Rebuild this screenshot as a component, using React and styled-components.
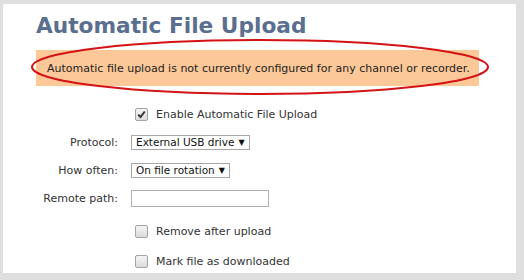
import React from "react";
import styled, { createGlobalStyle } from "styled-components";

const GlobalStyle = createGlobalStyle`
  html, body {
    margin: 0;
    padding: 0;
    background: #dfdfdf;
  }
  body {
    width: 524px;
    height: 280px;
    overflow: hidden;
    font-family: "DejaVu Sans", Verdana, sans-serif;
  }
`;

const Page = styled.div`
  padding: 4px 0 0 3px;
`;

const Panel = styled.div`
  width: 513px;
  height: 269px;
  background: #fff;
  box-sizing: border-box;
  padding: 7px 0 0 33px;
`;

const Title = styled.h1`
  margin: 0;
  font-family: "DejaVu Sans", Verdana, sans-serif;
  font-weight: bold;
  font-size: 21.7px;
  line-height: 30px;
  color: #5a6f8f;
`;

const NoticeWrap = styled.div`
  position: relative;
  margin-top: 9px;
  width: 443px;
`;

const Notice = styled.div`
  height: 36px;
  background: #fcc897;
  display: flex;
  align-items: center;
  padding-left: 11px;
  font-size: 11px;
  color: #222;
  white-space: nowrap;
`;

const Ellipse = styled.svg`
  position: absolute;
  left: -5px;
  top: -11px;
  overflow: visible;
  pointer-events: none;
`;

const Form = styled.div`
  display: grid;
  grid-template-columns: 82px 1fr;
  column-gap: 13px;
  margin-top: 14px;
  font-size: 11px;
  color: #333;
`;

const Label = styled.div`
  height: ${(p) => p.h || 28}px;
  display: flex;
  align-items: center;
  justify-content: flex-end;
`;

const Cell = styled.div`
  height: ${(p) => p.h || 28}px;
  display: flex;
  align-items: center;
`;

const Check = styled.span`
  width: 11px;
  height: 11px;
  margin: 0 8px 0 4px;
  border: 1px solid #a3a3a3;
  border-radius: 2px;
  background: linear-gradient(#f4f4f4, #dcdcdc);
  display: inline-flex;
  align-items: center;
  justify-content: center;
  flex: none;
`;

const Select = styled.div`
  height: 15px;
  box-sizing: border-box;
  border: 1px solid #a8a8a8;
  background: #fff;
  display: flex;
  align-items: center;
  padding: 0 4px;
  font-size: 10.5px;
  color: #111;
  gap: 4px;
`;

const Arrow = styled.span`
  font-size: 8px;
  color: #111;
`;

const TextBox = styled.div`
  width: 138px;
  height: 17px;
  box-sizing: border-box;
  border: 1px solid #b0b0b0;
  background: #fff;
`;

const CheckRow = ({ checked, label, h }) => (
  <>
    <Label h={h} />
    <Cell h={h}>
      <Check>
        {checked && (
          <svg width="9" height="9" viewBox="0 0 9 9">
            <path d="M1.2 4.6 L3.5 7 L7.8 1.5" fill="none" stroke="#333" strokeWidth="2" />
          </svg>
        )}
      </Check>
      {label}
    </Cell>
  </>
);

export default function App() {
  return (
    <Page>
      <GlobalStyle />
      <Panel>
        <Title>Automatic File Upload</Title>
        <NoticeWrap>
          <Notice>Automatic file upload is not currently configured for any channel or recorder.</Notice>
          <Ellipse width="458" height="56">
            <ellipse cx="229" cy="28" rx="228" ry="27" fill="none" stroke="#d41414" strokeWidth="2" />
          </Ellipse>
        </NoticeWrap>
        <Form>
          <CheckRow checked label="Enable Automatic File Upload" h={28} />
          <Label>Protocol:</Label>
          <Cell>
            <Select>
              External USB drive <Arrow>▼</Arrow>
            </Select>
          </Cell>
          <Label>How often:</Label>
          <Cell>
            <Select>
              On file rotation <Arrow>▼</Arrow>
            </Select>
          </Cell>
          <Label>Remote path:</Label>
          <Cell>
            <TextBox />
          </Cell>
          <CheckRow label="Remove after upload" h={38} />
          <CheckRow label="Mark file as downloaded" h={22} />
        </Form>
      </Panel>
    </Page>
  );
}
